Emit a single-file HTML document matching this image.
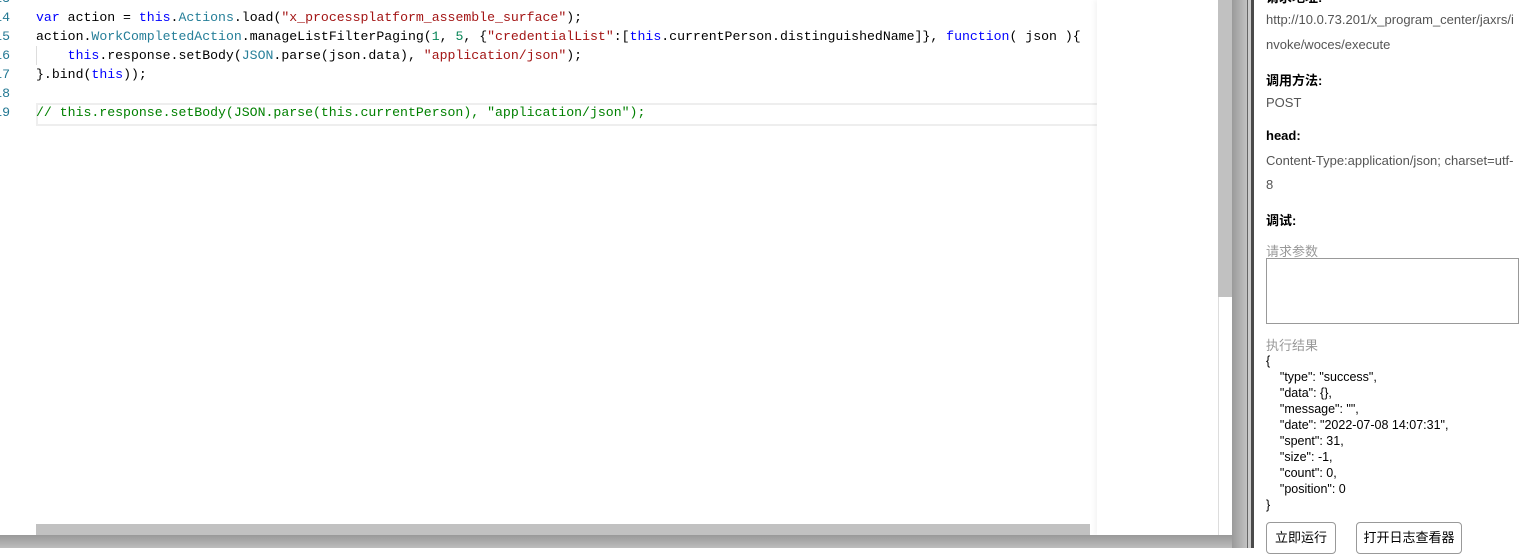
<!DOCTYPE html>
<html><head><meta charset="utf-8"><style>
*{margin:0;padding:0;box-sizing:border-box}
body{width:1527px;height:548px;overflow:hidden;background:#fff;position:relative;font-family:"Liberation Sans","Noto Sans CJK SC",sans-serif}
.a{position:absolute}
.code{font-family:"Liberation Mono","DejaVu Sans Mono",monospace;font-size:13.2px;white-space:pre;color:#000;line-height:19px}
.ln{color:#237893;text-align:right}
.k{color:#0000ff}.t{color:#267f99}.s{color:#a31515}.n{color:#098658}.c{color:#008000}
.p{font-size:13px;color:#555;}
.b{font-size:13px;font-weight:bold;color:#000}
.g{font-size:13px;color:#999}
.j{font-size:12.5px;color:#000;line-height:16px;white-space:pre}
.btn{border:1px solid #999;border-radius:4px;background:#fff;font-size:13px;color:#000;text-align:center;line-height:26px}
</style></head><body>
<div class="a" style="left:0;top:0;width:1232px;height:535px;background:#fff"></div>
<div class="a" style="top:103px;left:36px;width:1062px;height:23px;border:2px solid #eee;border-right:none"></div>
<div class="a code ln" style="left:-8px;top:-11px;width:18px">13
14
15
16
17
18
19</div>
<div class="a code" style="left:36px;top:8px"><span class="k">var</span> action = <span class="k">this</span>.<span class="t">Actions</span>.load(<span class="s">"x_processplatform_assemble_surface"</span>);
action.<span class="t">WorkCompletedAction</span>.manageListFilterPaging(<span class="n">1</span>, <span class="n">5</span>, {<span class="s">"credentialList"</span>:[<span class="k">this</span>.currentPerson.distinguishedName]}, <span class="k">function</span>( json ){
    <span class="k">this</span>.response.setBody(<span class="t">JSON</span>.parse(json.data), <span class="s">"application/json"</span>);
}.bind(<span class="k">this</span>));

<span class="c">// this.response.setBody(JSON.parse(this.currentPerson), "application/json");</span></div>
<div class="a" style="left:36px;top:46px;width:1px;height:19px;background:#ddd"></div>
<div class="a" style="left:1097px;top:0;width:121px;height:535px;background:#fff;box-shadow:-3px 0 4px rgba(0,0,0,0.04)"></div>
<div class="a" style="left:1218px;top:0;width:14px;height:535px;background:#fff;border-left:1px solid #ddd"></div>
<div class="a" style="left:1218px;top:0;width:14px;height:297px;background:#c1c1c1"></div>
<div class="a" style="left:36px;top:524px;width:1054px;height:11px;background:#c1c1c1"></div>
<div class="a" style="left:0;top:535px;width:1247px;height:13px;background:linear-gradient(#999,#bdbdbd)"></div>
<div class="a" style="left:1232px;top:0;width:15px;height:548px;background:linear-gradient(90deg,#9a9a9a,#c2c2c2)"></div>
<div class="a" style="left:1247px;top:0;width:1px;height:548px;background:#666"></div>
<div class="a" style="left:1248px;top:0;width:3px;height:548px;background:#ccc"></div>
<div class="a" style="left:1251px;top:0;width:3px;height:548px;background:#4a4a4a"></div>
<div class="a b" style="left:1266px;top:-13px">请求地址:</div>
<div class="a p" style="left:1266px;top:12px">http://10.0.73.201/x_program_center/jaxrs/i</div>
<div class="a p" style="left:1266px;top:37px">nvoke/woces/execute</div>
<div class="a b" style="left:1266px;top:70px">调用方法:</div>
<div class="a p" style="left:1266px;top:95px">POST</div>
<div class="a b" style="left:1266px;top:128px">head:</div>
<div class="a p" style="left:1266px;top:153px">Content-Type:application/json; charset=utf-</div>
<div class="a p" style="left:1266px;top:177px">8</div>
<div class="a b" style="left:1266px;top:210px">调试:</div>
<div class="a g" style="left:1266px;top:241px">请求参数</div>
<div class="a" style="left:1266px;top:258px;width:253px;height:66px;border:1px solid #999"></div>
<div class="a g" style="left:1266px;top:335px">执行结果</div>
<div class="a j" style="left:1266px;top:353px">{
    "type": "success",
    "data": {},
    "message": "",
    "date": "2022-07-08 14:07:31",
    "spent": 31,
    "size": -1,
    "count": 0,
    "position": 0
}</div>
<div class="a btn" style="left:1266px;top:522px;width:70px;height:32px;line-height:30px">立即运行</div>
<div class="a btn" style="left:1356px;top:522px;width:106px;height:32px;line-height:30px">打开日志查看器</div>
</body></html>
